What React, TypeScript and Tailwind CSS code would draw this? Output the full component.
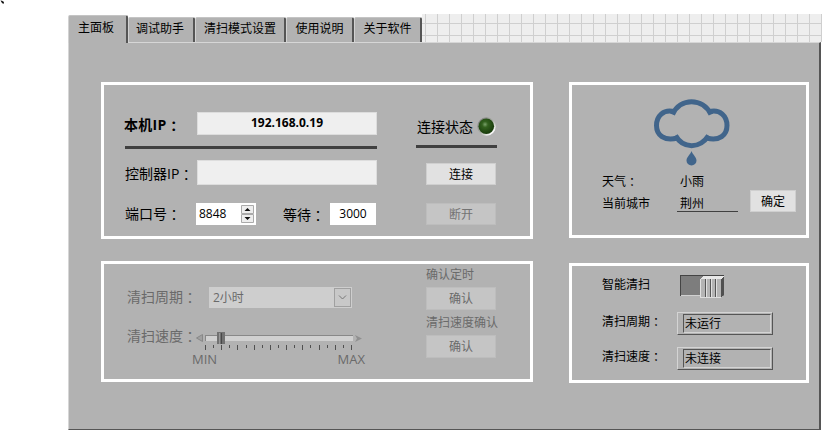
import React from "react";

type TextProps = { children: React.ReactNode; className?: string };

const Colon = () => <span className='relative top-px font-["Noto_Sans_CJK_JP",sans-serif]'>：</span>;

const Label = ({ children, className = "" }: TextProps) => (
  <span className={`block whitespace-nowrap leading-[20px] ${className}`}>{children}</span>
);

const Button = ({ children, className = "" }: TextProps) => (
  <div className={`flex shrink-0 items-center justify-center border text-[12px] leading-none ${className}`}>
    {children}
  </div>
);

const Tab = ({ children, className = "" }: TextProps) => (
  <div className={`flex shrink-0 items-center justify-center rounded-t-[2px] border-r-2 border-l border-t border-l-[#d2d2d2] border-r-[#555] border-t-[#c4c4c4] bg-[#b2b2b2] text-[12px] ${className}`}>
    {children}
  </div>
);

const StatusField = ({ children }: TextProps) => (
  <div className="h-[23px] w-[96px] shrink-0 border border-[#d4d4d4] border-r-[#555] border-b-[#555] py-px pr-px pl-[5px]">
    <div className="flex h-[19px] items-center border border-[#555] border-r-[#d4d4d4] border-b-[#d4d4d4] pl-px text-[12px] leading-none">
      {children}
    </div>
  </div>
);

const Cloud = () => (
  <svg width="77" height="68" viewBox="0 0 77 68" className="block" fill="none" stroke="#41658b" strokeWidth="5">
    <path d="M19.500 15.500 C27 -1.500 50 -1.500 58 15.500" />
    <path d="M22 12.800 C10 9.500 3.500 17.500 3.500 26.500 C3.500 36 11 42.500 24.500 39" />
    <path d="M55.500 12.800 C67.500 9.500 74 17.500 74 26.500 C74 36 66.500 42.500 53.500 39" />
    <path d="M22.500 36.500 C30 50 47 50 55.500 36.500" />
    <path d="M38.500 52 C37.500 55.500 33.500 58 33.500 61.500 A5 5 0 0 0 43.500 61.500 C43.500 58 39.500 55.500 38.500 52 Z" fill="#41658b" stroke="none" />
  </svg>
);

const Led = () => (
  <svg width="22" height="22" viewBox="0 0 22 22" className="block">
    <defs>
      <radialGradient id="led" cx=".42" cy=".38" r=".62">
        <stop offset="0" stopColor="#79a06a" />
        <stop offset=".3" stopColor="#33611f" />
        <stop offset="1" stopColor="#173a0a" />
      </radialGradient>
      <linearGradient id="rim" x1="0" y1="0" x2="1" y2="1">
        <stop offset=".1" stopColor="#7d7d7d" />
        <stop offset=".5" stopColor="#a9aea5" />
        <stop offset=".85" stopColor="#fff" />
      </linearGradient>
    </defs>
    <circle cx="11.500" cy="11.500" r="9.200" fill="url(#rim)" />
    <circle cx="11.300" cy="11.300" r="7.800" fill="url(#led)" />
  </svg>
);

const Slider = () => (
  <svg width="170" height="20" viewBox="0 0 170 20" className="block" shapeRendering="crispEdges">
    <path d="M7.500 4.500 V11.500 L1.500 8 Z" fill="#a0a0a0" stroke="#888" strokeWidth="1" shapeRendering="auto" />
    <rect x="10" y="5" width="148" height="6" fill="#d0d0d0" />
    <path d="M10 5.500 H158 M10.500 5 V11" stroke="#888" />
    <path d="M160 5 L167 8.500 L160 12 L162 8.500 Z" fill="#909090" shapeRendering="auto" />
    <rect x="22" y="2" width="8" height="12" fill="#717171" />
    <path d="M24.500 3 V14" stroke="#999" />
    <path d="M26.500 3 V14" stroke="#484848" />
    {Array.from({ length: 19 }, (_, i) => (
      <rect key={i} x={Math.round(10 + i * 8.11)} y="15" width="1" height={i % 2 ? 3 : 5} fill="#505050" />
    ))}
  </svg>
);

const Toggle = () => (
  <svg width="46" height="24" viewBox="0 0 46 24" className="block" shapeRendering="crispEdges">
    <rect x="0" y="0" width="44" height="21" fill="#7d7d7d" />
    <path d="M0 .5 H44 M.5 0 V21" stroke="#444" />
    <path d="M1 20.500 H20" stroke="#d0d0d0" />
    <path d="M20 4 L23 1 H44 L41 4 Z" fill="#e8e8e8" />
    <path d="M41 4 L44 1 V19 L41 22 Z" fill="#505050" />
    <rect x="20" y="4" width="21" height="19" fill="#b4b4b4" />
    <path d="M20.500 4 V22 M26.500 4 V22 M31.500 4 V22 M36.500 4 V22" stroke="#e0e0e0" />
    <path d="M25.500 4 V22 M30.500 4 V22 M35.500 4 V22" stroke="#555" />
    <path d="M20 22.500 H41" stroke="#ddd" />
  </svg>
);

const ConnectionPanel = () => (
  <section className="flex h-[157px] w-[432px] border-3 border-white">
    <div className="ml-[21px] w-[252px]">
      <div className="mt-[27px] flex h-[23px] justify-between">
        <Label className="mt-[2px] -ml-px text-[14px] font-bold tracking-[0.3px]">本机IP<Colon /></Label>
        <div className="flex h-[23px] w-[180px] items-center justify-center border border-[#ddd] bg-[#efefef] pb-[2px] text-[12px] font-bold">192.168.0.19</div>
      </div>
      <div className="mt-[11px] h-[3px] bg-[#404040]" />
      <div className="mt-[11px] flex h-[25px] justify-between">
        <Label className="mt-[3px] text-[14px]">控制器IP<Colon /></Label>
        <div className="h-[25px] w-[180px] shrink-0 border border-[#ddd] bg-[#efefef]" />
      </div>
      <div className="mt-[18px] flex h-[22px]">
        <Label className="w-[71px] text-[14px]">端口号<Colon /></Label>
        <div className="flex h-[22px] w-[60px] items-center justify-between bg-white pr-[2px] pl-[3px] text-[12px]">
          8848
          <svg width="13" height="18" viewBox="0 0 13 18">
            <path d="M.5 .5 H12.500 V8.500 H.5 Z M.5 9.500 H12.500 V17.500 H.5 Z" fill="#eee" stroke="#aaa" />
            <path d="M3.500 6 L6.500 3 L9.500 6 Z M3.500 12 L6.500 15 L9.500 12 Z" fill="#111" />
          </svg>
        </div>
        <Label className="ml-[27px] mt-px w-[47px] text-[14px]">等待<Colon /></Label>
        <div className="flex h-[22px] w-[46px] items-center justify-center bg-white text-[12px]">3000</div>
      </div>
    </div>
    <div className="ml-[39px] w-[81px]">
      <div className="mt-[30px] flex h-[22px] w-[82px]">
        <Label className="mt-[2px] ml-px w-[58px] text-[14px]">连接状态</Label>
        <Led />
      </div>
      <div className="mt-[8px] h-[3px] bg-[#404040]" />
      <Button className="mt-[15px] ml-[10px] h-[22px] w-[70px] border-[#cfcfcf] bg-[#e1e1e1] pt-px">连接</Button>
      <Button className="mt-[18px] ml-[10px] h-[22px] w-[70px] border-[#bdbdbd] bg-[#c5c5c5] pt-px text-[#737373]">断开</Button>
    </div>
  </section>
);

const WeatherPanel = () => (
  <section className="h-[156px] w-[240px] border-3 border-white">
    <div className="mt-[14px] ml-[81px]"><Cloud /></div>
    <div className="mt-[4px] ml-[30px] flex text-[12px]">
      <div className="w-[75px]">
        <Label>天气<Colon /></Label>
        <Label className="mt-[2px]">当前城市</Label>
      </div>
      <div className="w-[61px]">
        <Label className="mt-px pl-[3px]">小雨</Label>
        <Label className="mt-[2px] h-[18px] border-b border-[#404040] pl-[3px]">荆州</Label>
      </div>
      <Button className="mt-[19px] ml-[12px] h-[22px] w-[46px] border-[#cfcfcf] bg-[#e1e1e1] pt-px">确定</Button>
    </div>
  </section>
);

const SchedulePanel = () => (
  <section className="flex h-[121px] w-[432px] border-3 border-white text-[#6a6a6a]">
    <div className="ml-[23px] w-[240px]">
      <div className="mt-[23px] flex h-[21px]">
        <Label className="-mt-px w-[82px] text-[14px]">清扫周期<Colon /></Label>
        <div className="flex h-[21px] w-[143px] items-center justify-between bg-[#cecece] pr-px pl-[4px] text-[12px]">
          2小时
          <svg width="17" height="19" viewBox="0 0 17 19" fill="#c8c8c8" stroke="#a0a0a0">
            <rect x=".5" y=".5" width="16" height="18" />
            <path d="M5 7.500 L8.500 11 L12 7.500" stroke="#777" fill="none" />
          </svg>
        </div>
      </div>
      <div className="mt-[18px] flex h-[25px]">
        <Label className="-mt-px w-[68px] text-[14px]">清扫速度<Colon /></Label>
        <div className="mt-[4px]"><Slider /></div>
      </div>
      <div className="ml-[65px] flex w-[173px] justify-between text-[13px] leading-[16px]">
        <span>MIN</span><span>MAX</span>
      </div>
    </div>
    <div className="ml-[59px] w-[80px] text-[12px]">
      <Label className="mt-px">确认定时</Label>
      <Button className="mt-[2px] h-[23px] w-[70px] border-[#bdbdbd] bg-[#c5c5c5] pt-px">确认</Button>
      <Label className="mt-[3px]">清扫速度确认</Label>
      <Button className="mt-[2px] h-[23px] w-[70px] border-[#bdbdbd] bg-[#c5c5c5] pt-px">确认</Button>
    </div>
  </section>
);

const SmartPanel = () => (
  <section className="h-[120px] w-[240px] border-3 border-white pl-[30px] text-[12px]">
    <div className="mt-[9px] flex h-[24px]">
      <Label className="w-[78px]">智能清扫</Label>
      <Toggle />
    </div>
    <div className="mt-[13px] flex h-[23px]">
      <Label className="-mt-px w-[75px]">清扫周期<Colon /></Label>
      <StatusField>未运行</StatusField>
    </div>
    <div className="mt-[12px] flex h-[23px]">
      <Label className="-mt-px w-[75px]">清扫速度<Colon /></Label>
      <StatusField>未连接</StatusField>
    </div>
  </section>
);

export default function App() {
  return (
    <div className='flex h-[430px] w-[822px] overflow-hidden bg-white font-["Open_Sans","Noto_Sans_CJK_SC",sans-serif] text-black'>
      <div className="w-[68px] shrink-0">
        <svg width="6" height="5" viewBox="0 0 6 5" className="block"><path d="M.5 .5 L2 .8 L4 2 L3.500 4 L2 3 Z" fill="#111" /></svg>
      </div>
      <div className="flex w-[754px] flex-col pt-[14px]">
        <div className="flex h-[28px] items-end">
          <Tab className="z-10 -mb-px h-[28px] w-[60px] pr-[3px] pb-[4px]">主面板</Tab>
          <Tab className="h-[25px] w-[67px] pr-[2px] pb-[2px]">调试助手</Tab>
          <Tab className="h-[25px] w-[91px] pb-[2px]">清扫模式设置</Tab>
          <Tab className="h-[25px] w-[68px] pb-[2px]">使用说明</Tab>
          <Tab className="h-[25px] w-[68px] pb-[2px]">关于软件</Tab>
          <div className="h-[28px] flex-1 bg-[#eee] bg-[linear-gradient(to_right,#cfcfcf_1px,transparent_1px),linear-gradient(to_bottom,#cfcfcf_1px,transparent_1px)] bg-[size:12px_12px] bg-[position:3px_9px]" />
        </div>
        <main className="flex h-[388px] w-[753px] gap-[36px] border-t border-r-2 border-b border-l border-t-[#d6d6d6] border-r-[#555] border-b-[#555] border-l-[#d6d6d6] bg-[#b2b2b2] pt-[39px] pl-[32px]">
          <div className="flex flex-col gap-[22px]">
            <ConnectionPanel />
            <SchedulePanel />
          </div>
          <div className="flex flex-col gap-[25px]">
            <WeatherPanel />
            <SmartPanel />
          </div>
        </main>
      </div>
    </div>
  );
}
